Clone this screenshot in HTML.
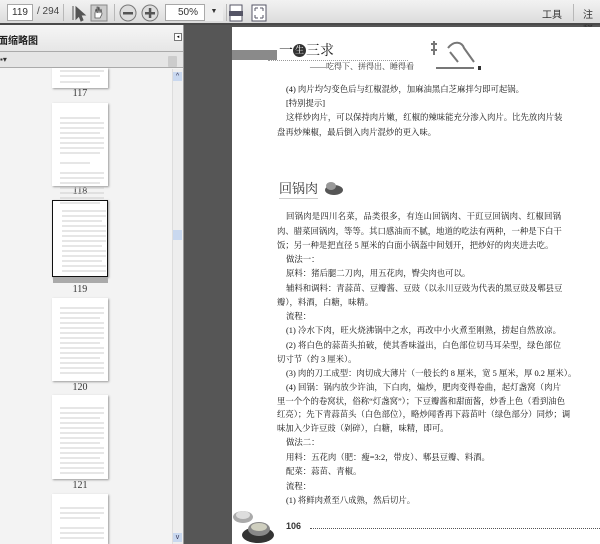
<!DOCTYPE html>
<html><head><meta charset="utf-8"><style>
*{margin:0;padding:0;box-sizing:border-box}
body{width:600px;height:544px;overflow:hidden;position:relative;background:#565656;font-family:"Liberation Sans","Noto Sans CJK SC",sans-serif}
.abs{position:absolute}
#tb{left:0;top:0;width:600px;height:25px;background:linear-gradient(#f2f2f2,#dcdcdc);border-bottom:2px solid #4a4a4a}
.box{position:absolute;background:#fff;border:1px solid #a8a8a8;font-size:10px;color:#333;line-height:15px}
.sep{position:absolute;top:4px;width:1px;height:17px;background:#b8b8b8}
#panel{left:0;top:25px;width:184px;height:519px;background:#f3f3f3;border-right:1px solid #999}
.thumb{position:absolute;left:52px;width:56px;background:#fff;box-shadow:1px 1px 2px #999}
.lbl{position:absolute;left:52px;width:56px;text-align:center;font-size:10px;color:#333;font-family:"Liberation Serif",serif}
#page{left:232px;top:27px;width:368px;height:517px;background:#fff}
.t{position:absolute;left:277px;width:284px;font-size:8.4px;color:#111;font-family:"Liberation Serif","Noto Serif CJK SC",serif;white-space:nowrap;line-height:11px}
.j{text-align:justify;text-align-last:justify}
</style></head><body>
<div id="tb" class="abs">
 <div class="box" style="left:7px;top:4px;width:26px;height:17px;text-align:center">119</div>
 <div class="abs" style="left:37px;top:6px;font-size:10px;color:#444">/ 294</div>
 <div class="sep" style="left:63px"></div>
 <svg class="abs" style="left:70px;top:4px" width="40" height="18"><path d="M3 2v14M6 3l0 12 3-3 2 5 2-1-2-5 4 0z" fill="#555" stroke="#555" stroke-width="1"/><rect x="21" y="1" width="16" height="16" fill="#ccc" stroke="#888"/><path d="M25 14v-5l1-4 1 4 0-6 1 0 0 6 1-6 1 6 1-4 1 5-2 4z" fill="#fff" stroke="#555" stroke-width=".8"/></svg>
 <div class="sep" style="left:114px"></div>
 <svg class="abs" style="left:119px;top:3px" width="42" height="20"><circle cx="9" cy="10" r="8" fill="#ddd" stroke="#777"/><rect x="4" y="9" width="10" height="2.5" fill="#555"/><circle cx="31" cy="10" r="8" fill="#ddd" stroke="#777"/><rect x="26" y="9" width="10" height="2.5" fill="#555"/><rect x="29.8" y="5" width="2.5" height="10" fill="#555"/></svg>
 <div class="box" style="left:165px;top:4px;width:58px;height:17px;padding-left:12px">50%<span style="position:absolute;left:38px;top:-1px;width:19px;height:17px;border-left:1px solid #aaa;background:#eee;text-align:center;font-size:7px">▼</span></div>
 <div class="sep" style="left:226px"></div>
 <svg class="abs" style="left:228px;top:4px" width="40" height="18"><rect x="2" y="1" width="12" height="16" fill="#fff" stroke="#556"/><rect x="1" y="7" width="14" height="5" fill="#556"/><rect x="24" y="1" width="14" height="16" fill="#fff" stroke="#556"/><path d="M27 4h3M27 4v3M35 4h-3M35 4v3M27 14h3M27 14v-3M35 14h-3M35 14v-3" stroke="#556"/></svg>
 <div class="abs" style="left:542px;top:6px;font-size:10px;color:#333">工具</div>
 <div class="sep" style="left:573px"></div>
 <div class="abs" style="left:583px;top:6px;font-size:10px;color:#333">注释</div>
</div>
<div id="panel" class="abs">
 <div class="abs" style="left:0;top:0;width:183px;height:27px;background:linear-gradient(#f6f6f6,#e6e6e6);border-bottom:1px solid #aaa"></div>
 <div class="abs" style="left:-2px;top:7px;font-size:10px;color:#222;font-weight:bold">面缩略图</div>
 <div class="abs" style="left:174px;top:8px;width:8px;height:8px;border:1px solid #777;background:#fff;font-size:5px;text-align:center;line-height:6px">◂</div>
 <div class="abs" style="left:0;top:27px;width:183px;height:16px;background:#e5e5e5;border-bottom:1px solid #aaa"></div>
 <div class="abs" style="left:0;top:30px;font-size:8px;color:#333">▪▾</div>
 <div class="abs" style="left:168px;top:31px;width:9px;height:11px;background:#ccc;border-radius:1px"></div>
 <div class="abs" style="left:172px;top:44px;width:11px;height:475px;background:#eee;border-left:1px solid #ddd"></div>
 <div class="abs" style="left:173px;top:47px;width:9px;height:9px;background:#c9d8ef;font-size:7px;color:#335;text-align:center;line-height:9px">^</div>
 <div class="abs" style="left:173px;top:205px;width:9px;height:10px;background:#c9d8ef"></div>
 <div class="abs" style="left:173px;top:508px;width:9px;height:9px;background:#c9d8ef;font-size:7px;color:#335;text-align:center;line-height:9px">v</div>
</div>
<div class="thumb" style="top:68px;height:20px"></div><div class="lbl" style="top:88px">117</div>
<div class="thumb" style="top:103px;height:83px"></div><div class="lbl" style="top:186px">118</div>
<div class="thumb" style="top:200px;height:77px;border:1px solid #111"></div>
<div class="abs" style="left:53px;top:277px;width:55px;height:6px;background:#aaa"></div><div class="lbl" style="top:284px">119</div>
<div class="thumb" style="top:298px;height:83px"></div><div class="lbl" style="top:382px">120</div>
<div class="thumb" style="top:395px;height:84px"></div><div class="lbl" style="top:480px">121</div>
<div class="thumb" style="top:494px;height:50px"></div>
<svg class="abs" style="left:52px;top:68px" width="56" height="476">
<g stroke="#ccc" stroke-width="1">
<path d="M8 3h44M8 8h40M8 14h30"/>
<path d="M8 50h40M8 55h44M8 60h44M8 65h40M8 70h44M8 75h44M8 80h44M8 85h40M8 95h30M8 105h44M8 110h44M8 115h40M8 120h44M8 125h44M8 130h44M8 135h40"/>
<path d="M10 143h44M10 148h44M10 153h40M10 158h44M10 163h44M10 168h44M10 173h44M10 178h40M10 183h44M10 188h44M10 193h40M10 198h44M10 203h44"/>
<path d="M8 240h44M8 245h44M8 250h40M8 255h44M8 260h44M8 265h44M8 270h44M8 275h40M8 280h44M8 285h44M8 290h40M8 295h44M8 300h44M8 305h44"/>
<path d="M8 340h44M8 345h44M8 350h40M8 355h44M8 360h44M8 365h44M8 370h44M8 375h40M8 380h44M8 385h44M8 390h40M8 395h44M8 400h44M8 405h44"/>
<path d="M8 440h44M8 445h44M8 450h40M8 460h44M8 465h44M8 470h44"/>
</g></svg>
<div id="page" class="abs"></div>
<div class="abs" style="left:232px;top:50px;width:45px;height:10px;background:#8a8a8a"></div>
<div class="abs" style="left:268px;top:60px;width:140px;border-top:1px dotted #999"></div>
<div class="abs" style="left:279px;top:40px;font-size:14px;font-family:'Liberation Serif','Noto Serif CJK SC',serif;color:#222">一<span style="display:inline-block;width:13px;height:13px;border-radius:50%;background:#333;color:#fff;font-size:9px;text-align:center;line-height:13px;vertical-align:2px">生</span>三求</div>
<div class="abs" style="left:310px;top:61px;font-size:8px;color:#333;font-family:'Liberation Serif','Noto Serif CJK SC',serif">——吃得下、拼得出、睡得看</div>
<svg class="abs" style="left:428px;top:38px" width="55" height="35"><path d="M6 3v14M3 6h6M3 12h6M20 10c6-8 14-6 16 0l10 14M22 14l8 10M8 30h38" stroke="#777" stroke-width="2" fill="none"/><rect x="50" y="28" width="3" height="4" fill="#333"/></svg>
<div class="t" style="top:84px;left:286px">(4) 肉片均匀变色后与红椒混炒，加麻油黑白芝麻拌匀即可起锅。</div>
<div class="t" style="top:98px;left:286px">[特别提示]</div>
<div class="t j" style="top:112px;left:286px;width:275px">这样炒肉片，可以保持肉片嫩，红椒的辣味能充分渗入肉片。比先放肉片装</div>
<div class="t" style="top:127px">盘再炒辣椒，最后倒入肉片混炒的更入味。</div>
<div class="abs" style="left:279px;top:178px;font-size:13px;color:#333;font-family:'Liberation Serif','Noto Serif CJK SC',serif;border-bottom:1px solid #ccc;padding-bottom:1px">回锅肉</div>
<svg class="abs" style="left:322px;top:180px" width="22" height="16"><ellipse cx="12" cy="10" rx="9" ry="5" fill="#555"/><ellipse cx="9" cy="6" rx="5" ry="4" fill="#999"/></svg>
<div class="t j" style="top:211px;left:286px;width:275px">回锅肉是四川名菜，品类很多，有连山回锅肉、干豇豆回锅肉、红椒回锅</div>
<div class="t j" style="top:226px">肉、腊菜回锅肉，等等。其口感油而不腻，地道的吃法有两种，一种是下白干</div>
<div class="t" style="top:240px">饭；另一种是把直径 5 厘米的白面小锅盔中间划开，把炒好的肉夹进去吃。</div>
<div class="t" style="top:254px;left:286px">做法一：</div>
<div class="t" style="top:268px;left:286px">原料：猪后腿二刀肉，用五花肉，臀尖肉也可以。</div>
<div class="t j" style="top:283px;left:286px;width:275px">辅料和调料：青蒜苗、豆瓣酱、豆豉（以永川豆豉为代表的黑豆豉及郫县豆</div>
<div class="t" style="top:297px">瓣），料酒，白糖，味精。</div>
<div class="t" style="top:311px;left:286px">流程：</div>
<div class="t j" style="top:325px;left:286px;width:275px">(1) 冷水下肉，旺火烧沸锅中之水，再改中小火煮至刚熟，捞起自然放凉。</div>
<div class="t j" style="top:340px;left:286px;width:275px">(2) 将白色的蒜苗头拍破，使其香味溢出，白色部位切马耳朵型，绿色部位</div>
<div class="t" style="top:354px">切寸节（约 3 厘米）。</div>
<div class="t j" style="top:368px;left:286px;width:275px">(3) 肉的刀工成型：肉切成大薄片（一般长约 8 厘米，宽 5 厘米，厚 0.2 厘米）。</div>
<div class="t j" style="top:382px;left:286px;width:275px">(4) 回锅：锅内放少许油，下白肉，煸炒，肥肉变得卷曲，起灯盏窝（肉片</div>
<div class="t j" style="top:396px">里一个个的卷窝状，俗称“灯盏窝”）；下豆瓣酱和甜面酱，炒香上色（看到油色</div>
<div class="t j" style="top:409px">红亮）；先下青蒜苗头（白色部位），略炒闻香再下蒜苗叶（绿色部分）同炒；调</div>
<div class="t" style="top:423px">味加入少许豆豉（剁碎），白糖，味精，即可。</div>
<div class="t" style="top:437px;left:286px">做法二：</div>
<div class="t" style="top:452px;left:286px">用料：五花肉（肥：瘦=3:2，带皮）、郫县豆瓣、料酒。</div>
<div class="t" style="top:466px;left:286px">配菜：蒜苗、青椒。</div>
<div class="t" style="top:481px;left:286px">流程：</div>
<div class="t" style="top:495px;left:286px">(1) 将鲜肉煮至八成熟，然后切片。</div>
<svg class="abs" style="left:232px;top:505px" width="46" height="39"><ellipse cx="11" cy="12" rx="10" ry="6" fill="#aaa"/><ellipse cx="11" cy="10" rx="7" ry="4" fill="#ddd"/><ellipse cx="26" cy="30" rx="16" ry="8" fill="#333"/><ellipse cx="27" cy="24" rx="11" ry="7" fill="#888"/><ellipse cx="27" cy="22" rx="8" ry="4" fill="#cfcfbf"/></svg>
<div class="abs" style="left:286px;top:521px;font-size:9px;font-weight:bold;color:#333">106</div>
<div class="abs" style="left:310px;top:528px;width:290px;border-top:1px dotted #555"></div>
</body></html>
